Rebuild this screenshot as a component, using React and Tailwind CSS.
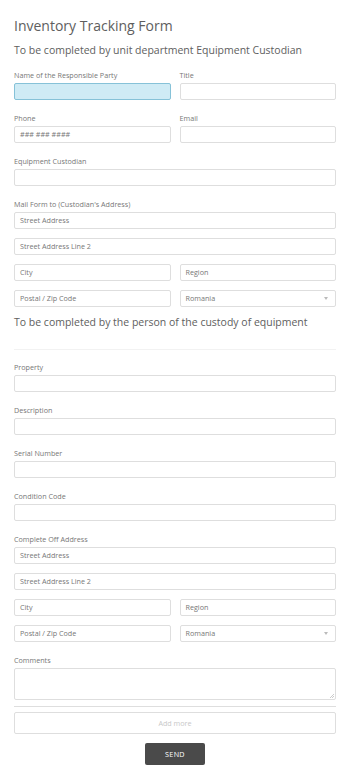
import React from "react";

const font = { fontFamily: '"Open Sans", "Liberation Sans", sans-serif' };

function Label({ children, className = "" }) {
    return (
        <div className={"text-[7.2px] leading-[10px] text-[#777] mb-[3px] " + className}>
            {children}
        </div>
    );
}

function Box({ children, active = false, select = false }) {
    return (
        <div
            className={
                "h-[17px] border rounded-[2px] px-[5px] flex items-center justify-between text-[7.2px] text-[#777] " +
                (active ? "bg-[#cfebf5] border-[#86c2d8]" : "bg-white border-[#dedede]")
            }
        >
            <span>{children}</span>
            {select && (
                <span className="w-0 h-0 border-l-[2.5px] border-r-[2.5px] border-t-[3px] border-l-transparent border-r-transparent border-t-[#bbb] mr-[2px]" />
            )}
        </div>
    );
}

function Field({ label, children }) {
    return (
        <div className="mb-[13px]">
            <Label>{label}</Label>
            {children}
        </div>
    );
}

function Address({ label }) {
    return (
        <div>
            <Label>{label}</Label>
            <div className="flex flex-col gap-[9px]">
                <Box>Street Address</Box>
                <Box>Street Address Line 2</Box>
                <div className="grid grid-cols-2 gap-[9px]">
                    <Box>City</Box>
                    <Box>Region</Box>
                </div>
                <div className="grid grid-cols-2 gap-[9px]">
                    <Box>Postal / Zip Code</Box>
                    <Box select>Romania</Box>
                </div>
            </div>
        </div>
    );
}

export default function App() {
    return (
        <div className="w-[350px] min-h-[778px] bg-white px-[14px] pt-[17px] pb-[15px]" style={font}>
            {/* Header */}
            <h1 className="text-[14px] leading-[18px] text-[#5e5e5e] font-normal">
                Inventory Tracking Form
            </h1>
            <h2 className="mt-[8px] text-[10.5px] leading-[14px] text-[#5e5e5e] font-normal">
                To be completed by unit department Equipment Custodian
            </h2>

            {/* Custodian part */}
            <div className="mt-[13px]">
                <div className="grid grid-cols-2 gap-x-[9px]">
                    <Field label="Name of the Responsible Party">
                        <Box active />
                    </Field>
                    <Field label="Title">
                        <Box />
                    </Field>
                    <Field label="Phone">
                        <Box>### ### ####</Box>
                    </Field>
                    <Field label="Email">
                        <Box />
                    </Field>
                </div>
                <Field label="Equipment Custodian">
                    <Box />
                </Field>
                <Address label="Mail Form to (Custodian's Address)" />
            </div>

            <h2 className="mt-[8px] text-[10.5px] leading-[14px] text-[#5e5e5e] font-normal">
                To be completed by the person of the custody of equipment
            </h2>
            <div className="mt-[20px] border-t border-[#f2f2f2] mb-[12px]" />

            {/* Equipment part */}
            <Field label="Property">
                <Box />
            </Field>
            <Field label="Description">
                <Box />
            </Field>
            <Field label="Serial Number">
                <Box />
            </Field>
            <Field label="Condition Code">
                <Box />
            </Field>
            <Address label="Complete Off Address" />

            <div className="mt-[13px]">
                <Label>Comments</Label>
                <div className="relative h-[32px] border border-[#dedede] rounded-[2px] bg-white">
                    <svg className="absolute right-[1px] bottom-[1px]" width="5" height="5" viewBox="0 0 5 5">
                        <path d="M5 1 L1 5 M5 3 L3 5" stroke="#aaa" strokeWidth="0.6" />
                    </svg>
                </div>
            </div>

            <div className="mt-[6px] border-t border-[#dedede]" />
            <div className="mt-[5px] h-[22px] border border-[#dedede] rounded-[2px] flex items-center justify-center text-[7.2px] text-[#c8c8c8]">
                Add more
            </div>

            <div className="mt-[9px] flex justify-center">
                <button className="w-[60px] h-[22px] bg-[#4a4a4a] rounded-[2px] text-white text-[7.2px] tracking-[0.3px]">
                    SEND
                </button>
            </div>
        </div>
    );
}
